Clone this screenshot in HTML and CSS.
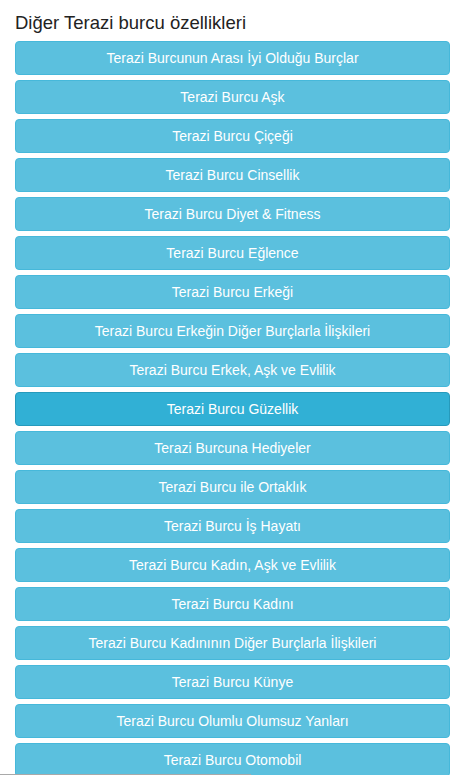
FILE: index.html
```html
<!DOCTYPE html>
<html lang="tr">
<head>
<meta charset="utf-8">
<link rel="stylesheet" href="styles.css">
</head>
<body>
<div class="panel">
  <h4 class="title">Diğer Terazi burcu özellikleri</h4>
  <div class="list">
    <a class="btn">Terazi Burcunun Arası İyi Olduğu Burçlar</a>
    <a class="btn">Terazi Burcu Aşk</a>
    <a class="btn">Terazi Burcu Çiçeği</a>
    <a class="btn">Terazi Burcu Cinsellik</a>
    <a class="btn">Terazi Burcu Diyet &amp; Fitness</a>
    <a class="btn">Terazi Burcu Eğlence</a>
    <a class="btn">Terazi Burcu Erkeği</a>
    <a class="btn">Terazi Burcu Erkeğin Diğer Burçlarla İlişkileri</a>
    <a class="btn">Terazi Burcu Erkek, Aşk ve Evlilik</a>
    <a class="btn active">Terazi Burcu Güzellik</a>
    <a class="btn">Terazi Burcuna Hediyeler</a>
    <a class="btn">Terazi Burcu ile Ortaklık</a>
    <a class="btn">Terazi Burcu İş Hayatı</a>
    <a class="btn">Terazi Burcu Kadın, Aşk ve Evlilik</a>
    <a class="btn">Terazi Burcu Kadını</a>
    <a class="btn">Terazi Burcu Kadınının Diğer Burçlarla İlişkileri</a>
    <a class="btn">Terazi Burcu Künye</a>
    <a class="btn">Terazi Burcu Olumlu Olumsuz Yanları</a>
    <a class="btn">Terazi Burcu Otomobil</a>
  </div>
</div>
<div class="scrollbar"></div>
</body>
</html>
```
FILE: styles.css
```css
html, body {
  margin: 0;
  padding: 0;
  background: #fff;
  font-family: "Liberation Sans", Arial, Helvetica, sans-serif;
  color: #333;
}
.panel {
  padding: 0 10px 0 15px;
}
.title {
  margin: 13px 0 8px 0;
  font-size: 18.5px;
  font-weight: 500;
  line-height: 20px;
  color: #222;
}
.list {
  display: flex;
  flex-direction: column;
  gap: 5px;
}
.btn {
  display: block;
  box-sizing: border-box;
  height: 34px;
  padding: 6px 12px;
  font-size: 14px;
  line-height: 20px;
  text-align: center;
  color: #fff;
  background: #5bc0de;
  border: 1px solid #46b8da;
  border-radius: 4px;
  white-space: nowrap;
}
.btn.active {
  background: #31b0d5;
  border-color: #269abc;
}
.scrollbar {
  position: fixed;
  left: 0;
  bottom: 0;
  width: 251px;
  height: 1px;
  background: #a9a9a9;
}
```
